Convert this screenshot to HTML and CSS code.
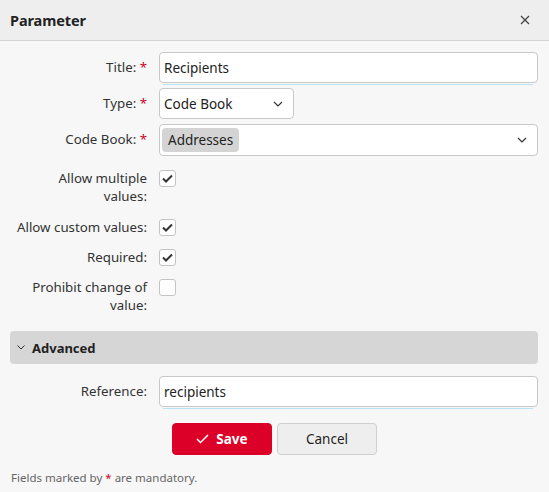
FILE: index.html
```html
<!DOCTYPE html>
<html>
<head>
<meta charset="utf-8">
<link rel="stylesheet" href="styles.css">
</head>
<body>
<div class="dialog">
  <div class="header">
    <span class="title">Parameter</span>
    <svg class="close" width="10" height="10" viewBox="0 0 10 10"><path d="M1 1L9 9M9 1L1 9" stroke="#444" stroke-width="1.3"/></svg>
  </div>
  <div class="body">
    <div class="row r-title">
      <label class="lbl">Title: <span class="req">*</span></label>
      <div class="field">
        <div class="input">Recipients</div>
        <div class="underline"></div>
      </div>
    </div>
    <div class="row r-type">
      <label class="lbl">Type: <span class="req">*</span></label>
      <div class="field">
        <div class="input select small">Code Book
          <svg class="chev" width="10" height="6" viewBox="0 0 10 6"><path d="M1 1L5 5L9 1" fill="none" stroke="#333" stroke-width="1.2"/></svg>
        </div>
      </div>
    </div>
    <div class="row r-cb">
      <label class="lbl">Code Book: <span class="req">*</span></label>
      <div class="field">
        <div class="input select multi"><span class="chip">Addresses</span>
          <svg class="chev" width="10" height="6" viewBox="0 0 10 6"><path d="M1 1L5 5L9 1" fill="none" stroke="#333" stroke-width="1.2"/></svg>
        </div>
      </div>
    </div>
    <div class="row chk r-multi">
      <label class="lbl">Allow multiple<br>values:</label>
      <div class="field"><span class="box"><svg width="11" height="9" viewBox="0 0 11 9"><path d="M1 4.5L4 7.5L10 1.5" fill="none" stroke="#333" stroke-width="2"/></svg></span></div>
    </div>
    <div class="row chk">
      <label class="lbl">Allow custom values:</label>
      <div class="field"><span class="box"><svg width="11" height="9" viewBox="0 0 11 9"><path d="M1 4.5L4 7.5L10 1.5" fill="none" stroke="#333" stroke-width="2"/></svg></span></div>
    </div>
    <div class="row chk">
      <label class="lbl">Required:</label>
      <div class="field"><span class="box"><svg width="11" height="9" viewBox="0 0 11 9"><path d="M1 4.5L4 7.5L10 1.5" fill="none" stroke="#333" stroke-width="2"/></svg></span></div>
    </div>
    <div class="row chk r-prohibit">
      <label class="lbl">Prohibit change of<br>value:</label>
      <div class="field"><span class="box"></span></div>
    </div>
    <div class="section">
      <svg width="8" height="5" viewBox="0 0 8 5"><path d="M0.5 0.5L4 4L7.5 0.5" fill="none" stroke="#333" stroke-width="1"/></svg>
      <span>Advanced</span>
    </div>
    <div class="row r-ref">
      <label class="lbl">Reference:</label>
      <div class="field">
        <div class="input">recipients</div>
        <div class="underline"></div>
      </div>
    </div>
    <div class="buttons">
      <button class="btn save"><svg width="13" height="10" viewBox="0 0 13 10"><path d="M1 5L4.5 8.5L12 1" fill="none" stroke="#fff" stroke-width="1.5"/></svg>Save</button>
      <button class="btn cancel">Cancel</button>
    </div>
    <div class="note">Fields marked by <span class="req">*</span> are mandatory.</div>
  </div>
</div>
</body>
</html>
```
FILE: styles.css
```css
* { box-sizing: border-box; }
html, body { margin: 0; padding: 0; }
body {
  width: 549px;
  height: 492px;
  overflow: hidden;
  background: #f7f7f7;
  font-family: "Noto Sans", "Open Sans", sans-serif;
  font-size: 13.3px;
  color: #333;
}
.header {
  height: 41px;
  background: #eeeeee;
  border-bottom: 1px solid #d6d6d6;
  display: flex;
  align-items: center;
  justify-content: space-between;
  padding: 0 19px 0 10px;
}
.title {
  font-weight: 700;
  font-size: 14.5px;
  color: #222;
  letter-spacing: -0.1px;
}
.body {
  padding: 11px 11px 0 10px;
}
.row {
  display: grid;
  grid-template-columns: 137px 1fr;
  column-gap: 12px;
  align-items: start;
}
.lbl {
  text-align: right;
  line-height: 18px;
  color: #333;
  padding-top: 6px;
  white-space: nowrap;
}
.req { color: #d0021b; }
.input {
  height: 31px;
  background: #fff;
  border: 1px solid #c8c8c8;
  border-radius: 4px;
  padding: 0 4px;
  display: flex;
  align-items: center;
  font-size: 13.5px;
  color: #222;
}
.underline {
  height: 1px;
  background: #b8e2f6;
  margin: 1px 5px 0 4px;
}
.r-title { margin-bottom: 3px; }
.r-type { margin-bottom: 5px; }
.select { justify-content: space-between; }
.select .chev { margin-right: 2px; }
.small { width: 135px; padding-right: 8px; }
.multi { height: 32px; padding: 0 8px 0 2px; }
.chip {
  background: #d4d4d4;
  border-radius: 4px;
  height: 24px;
  padding: 0 6px;
  display: flex;
  align-items: center;
  font-size: 13.5px;
}
.r-cb { margin-bottom: 13px; }
.chk .lbl { padding-top: 0; }
.chk { margin-bottom: 12px; }
.r-multi { margin-bottom: 13px; }
.box {
  width: 17px;
  height: 17px;
  margin-top: 1px;
  background: #fff;
  border: 1px solid #c4c4c4;
  border-radius: 3px;
  display: flex;
  align-items: center;
  justify-content: center;
}
.r-prohibit { margin-bottom: 17px; }
.section {
  height: 33px;
  background: #d6d6d6;
  border-radius: 4px;
  display: flex;
  align-items: center;
  padding-left: 7px;
  gap: 7px;
  font-weight: 700;
  font-size: 13px;
  color: #222;
  margin-bottom: 12px;
}
.r-ref .lbl { padding-top: 6px; }
.r-ref { margin-bottom: 14px; }
.buttons {
  display: flex;
  justify-content: center;
  gap: 5px;
  margin-left: 1px;
}
.btn {
  width: 100px;
  height: 32px;
  border-radius: 4px;
  font-family: inherit;
  font-size: 13.5px;
  display: flex;
  align-items: center;
  justify-content: center;
  cursor: pointer;
}
.save {
  background: #dc0029;
  border: 1px solid #dc0029;
  color: #fff;
  font-weight: 700;
  gap: 7px;
}
.cancel {
  background: #eeeeee;
  border: 1px solid #cfcfcf;
  color: #222;
}
.note {
  margin-top: 15px;
  font-size: 11.5px;
  color: #666;
  padding-left: 1px;
}
```
